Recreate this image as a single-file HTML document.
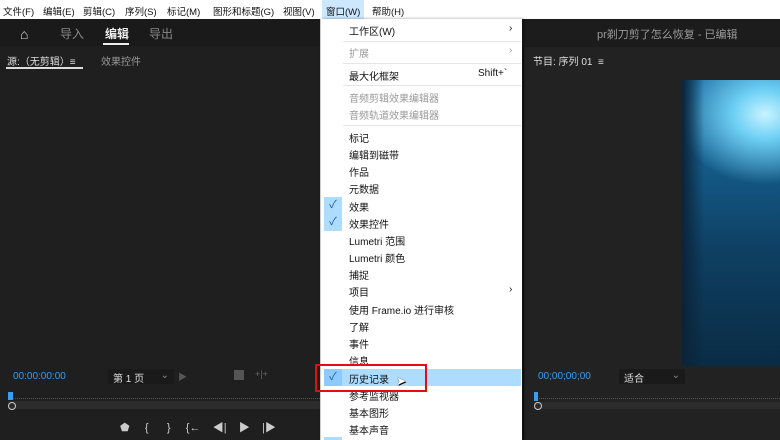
<!DOCTYPE html><html><head><meta charset="utf-8"><style>
*{margin:0;padding:0;box-sizing:border-box}
body{width:780px;height:440px;overflow:hidden;background:#1f1f1f;font-family:"Liberation Sans","Noto Sans CJK SC",sans-serif;position:relative;color:#ccc}
.a{position:absolute;white-space:nowrap}
#mb{left:0;top:0;width:780px;height:19px;background:#fff;font-size:9.5px;color:#111}
#mb span{position:absolute;top:4px}
#menu{left:320px;top:19px;width:202px;height:421px;background:#fff;border-left:1px solid #ccc;box-shadow:2px 0 3px rgba(0,0,0,.4)}
.it{position:absolute;left:28px;font-size:10px;color:#111}
.dis{color:#999}
.sep{position:absolute;left:22px;width:178px;height:1px;background:#e6e6e6}
.chk{position:absolute;left:3px;width:18px;height:17px;background:#aedcff;color:#1a5a9a;font-size:11px;text-align:center;line-height:17px}
</style></head><body>
<div class="a" id="mb">
<span style="left:3px">文件(F)</span><span style="left:43px">编辑(E)</span><span style="left:83px">剪辑(C)</span><span style="left:125px">序列(S)</span><span style="left:167px">标记(M)</span><span style="left:213px">图形和标题(G)</span><span style="left:283px">视图(V)</span>
<span style="left:322px;background:#cce8ff;top:0;height:19px;padding:4px 4px 0">窗口(W)</span><span style="left:372px">帮助(H)</span></div>
<div class="a" style="left:0;top:19px;width:320px;height:27px;background:#1a1a1a"></div>
<div class="a" style="left:20px;top:26px;font-size:14px;color:#ddd">&#8962;</div>
<div class="a" style="left:60px;top:25px;font-size:12px;color:#888">导入</div>
<div class="a" style="left:105px;top:25px;font-size:12px;color:#eee;font-weight:bold">编辑</div>
<div class="a" style="left:103px;top:43px;width:26px;height:2px;background:#eee"></div>
<div class="a" style="left:149px;top:25px;font-size:12px;color:#888">导出</div>
<div class="a" style="left:7px;top:53px;font-size:10px;color:#ddd">源:（无剪辑）≡</div>
<div class="a" style="left:6px;top:67px;width:77px;height:1.5px;background:#ddd"></div>
<div class="a" style="left:101px;top:53px;font-size:10px;color:#999">效果控件</div>
<div class="a" style="left:13px;top:371px;font-size:10px;color:#3b9cf0">00:00:00:00</div>
<div class="a" style="left:108px;top:369px;width:66px;height:15px;background:#1a1a1a;font-size:10px;color:#ddd;padding:1px 5px">第 1 页<span style="float:right;color:#888">⌄</span></div>
<div class="a" style="left:178px;top:370px;font-size:9px;color:#555">▶</div>
<div class="a" style="left:234px;top:370px;width:10px;height:10px;background:#555"></div>
<div class="a" style="left:255px;top:369px;font-size:9px;color:#666">+|+</div>
<div class="a" style="left:8px;top:398px;width:312px;height:8px;border-top:1px dotted #555"></div>
<div class="a" style="left:8px;top:401px;width:312px;height:8px;background:#2c2c2c"></div>
<div class="a" style="left:8px;top:392px;width:5px;height:8px;background:#3b9cf0"></div>
<div class="a" style="left:8px;top:402px;width:8px;height:8px;border:1.5px solid #ccc;border-radius:50%"></div>
<div class="a" style="left:120px;top:419px;font-size:11px;color:#ccc;letter-spacing:0">⬟&nbsp;&nbsp;&nbsp;&nbsp;&nbsp;{&nbsp;&nbsp;&nbsp;&nbsp;&nbsp;&nbsp;}&nbsp;&nbsp;&nbsp;&nbsp;&nbsp;{←&nbsp;&nbsp;&nbsp;&nbsp;◀|&nbsp;&nbsp;&nbsp;&nbsp;▶&nbsp;&nbsp;&nbsp;&nbsp;|▶</div>
<div class="a" style="left:523px;top:19px;width:257px;height:421px;background:#222;border-left:1px solid #111"></div>
<div class="a" style="left:523px;top:19px;width:257px;height:28px;background:#1c1c1c"></div>
<div class="a" style="left:597px;top:26px;font-size:11px;color:#999">pr剃刀剪了怎么恢复 - 已编辑</div>
<div class="a" style="left:533px;top:53px;font-size:10px;color:#ddd">节目: 序列 01 &nbsp;≡</div>
<div class="a" style="left:682px;top:80px;width:98px;height:286px;background:radial-gradient(ellipse 90px 70px at 85% 12%,#c8f4ff 0%,#6fd0f5 35%,rgba(30,110,170,0) 100%),linear-gradient(180deg,#1a6aa0 0%,#145a88 30%,#0e3f62 60%,#0a2c44 100%)"></div>
<div class="a" style="left:682px;top:80px;width:22px;height:286px;background:linear-gradient(90deg,#0b2338,rgba(11,35,56,0))"></div>
<div class="a" style="left:538px;top:371px;font-size:10px;color:#3b9cf0">00;00;00;00</div>
<div class="a" style="left:619px;top:369px;width:66px;height:15px;background:#1a1a1a;font-size:10px;color:#ddd;padding:1px 5px">适合<span style="float:right;color:#888">⌄</span></div>
<div class="a" style="left:534px;top:398px;width:246px;height:8px;border-top:1px dotted #555"></div>
<div class="a" style="left:534px;top:402px;width:246px;height:7px;background:#2c2c2c"></div>
<div class="a" style="left:534px;top:392px;width:4px;height:9px;background:#3b9cf0"></div>
<div class="a" style="left:534px;top:402px;width:8px;height:8px;border:1.5px solid #ccc;border-radius:50%"></div>
<div class="a" id="menu">
<div class="it" style="top:4px">工作区(W)</div><div class="it" style="top:4px;left:188px">›</div>
<div class="sep" style="top:22px"></div>
<div class="it dis" style="top:26px">扩展</div><div class="it dis" style="top:26px;left:188px">›</div>
<div class="sep" style="top:44px"></div>
<div class="it" style="top:49px">最大化框架</div><div class="it" style="top:49px;left:157px">Shift+`</div>
<div class="sep" style="top:66px"></div>
<div class="it dis" style="top:71px">音频剪辑效果编辑器</div>
<div class="it dis" style="top:88px">音频轨道效果编辑器</div>
<div class="sep" style="top:106px"></div>
<div class="it" style="top:111px">标记</div>
<div class="it" style="top:128px">编辑到磁带</div>
<div class="it" style="top:145px">作品</div>
<div class="it" style="top:162px">元数据</div>
<div class="chk" style="top:178px">✓</div><div class="it" style="top:180px">效果</div>
<div class="chk" style="top:195px">✓</div><div class="it" style="top:197px">效果控件</div>
<div class="it" style="top:214px">Lumetri 范围</div>
<div class="it" style="top:231px">Lumetri 颜色</div>
<div class="it" style="top:248px">捕捉</div>
<div class="it" style="top:265px">项目</div><div class="it" style="top:265px;left:188px">›</div>
<div class="it" style="top:283px">使用 Frame.io 进行审核</div>
<div class="it" style="top:300px">了解</div>
<div class="it" style="top:317px">事件</div>
<div class="it" style="top:334px">信息</div>
<div class="a" style="left:3px;top:350px;width:197px;height:17px;background:#aedcff"></div>
<div class="chk" style="top:350px;background:#8ccaff">✓</div><div class="it" style="top:352px">历史记录</div>
<div class="it" style="top:369px">参考监视器</div>
<div class="it" style="top:386px">基本图形</div>
<div class="it" style="top:403px">基本声音</div>
<div class="a" style="left:3px;top:418px;width:18px;height:3px;background:#aedcff"></div>
</div>
<div class="a" style="left:396px;top:374px;font-size:12px;color:#fff;text-shadow:0 0 1px #000,1px 1px 0 #000">➤</div>
<div class="a" style="left:315px;top:364px;width:112px;height:28px;border:2px solid #e01010"></div>
</body></html>
